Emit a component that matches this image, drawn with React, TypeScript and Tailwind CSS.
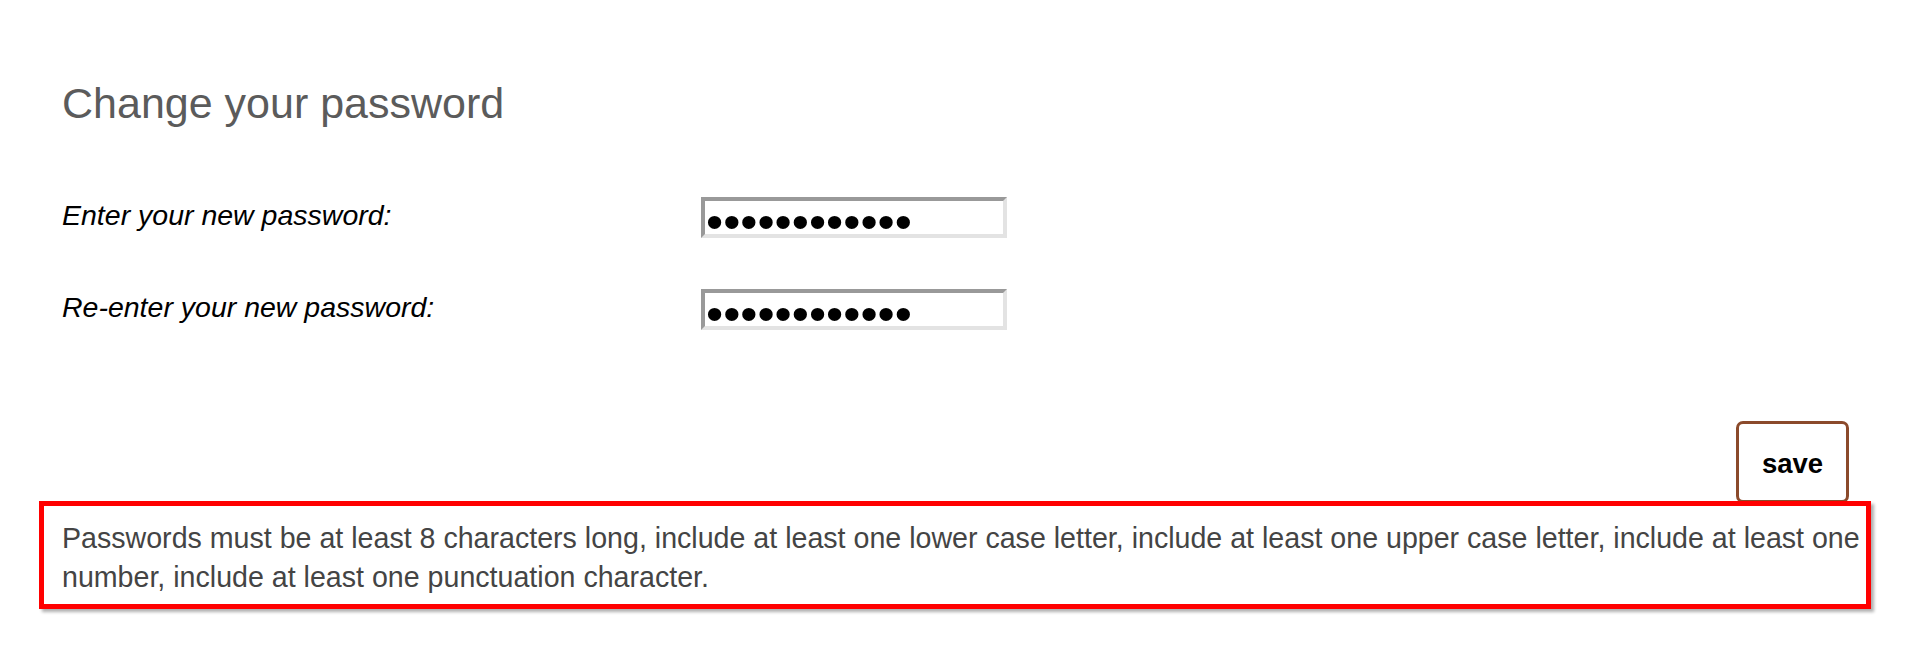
import React from 'react'

function PasswordField() {
  return (
    <div className="w-[306px] h-[41px] border-[4px] border-t-[#999999] border-l-[#999999] border-r-[#e3e3e3] border-b-[#e3e3e3] bg-white flex items-center">
      <span className="pl-[1px] pt-[7px] text-[49px] leading-[20px] text-black select-none">••••••••••••</span>
    </div>
  )
}

function Row({ label }: { label: string }) {
  return (
    <div className="flex items-start">
      <label className="w-[639px] text-[28.5px] leading-[37px] italic text-black">{label}</label>
      <PasswordField />
    </div>
  )
}

export default function App() {
  return (
    <div className="min-h-screen bg-white font-['Liberation_Sans',Arial,sans-serif]">
      <div className="pl-[62px] pr-[63px] pt-[79px]">
        <h1 className="text-[43px] leading-[48px] font-normal text-[#5b5b5b]">Change your password</h1>
        <div className="mt-[70px] flex flex-col gap-[51px]">
          <Row label="Enter your new password:" />
          <Row label="Re-enter your new password:" />
        </div>
        <div className="mt-[91px] flex justify-end">
          <button className="w-[113px] h-[82px] pt-[3px] border-[3px] border-[#8b4a2b] rounded-[7px] bg-white text-[27.5px] font-bold text-black">
            save
          </button>
        </div>
      </div>
      <div className="relative ml-[39px] mr-[41px] -mt-[2px] border-[5px] border-[#ff0000] bg-white shadow-[3px_3px_3px_#b0b0b0] pl-[18px] pt-[13px] pb-[7px] text-[28.6px] leading-[39px] text-[#444444]">
        Passwords must be at least 8 characters long, include at least one lower case letter, include at least one upper case letter, include at least one number, include at least one punctuation character.
      </div>
    </div>
  )
}
